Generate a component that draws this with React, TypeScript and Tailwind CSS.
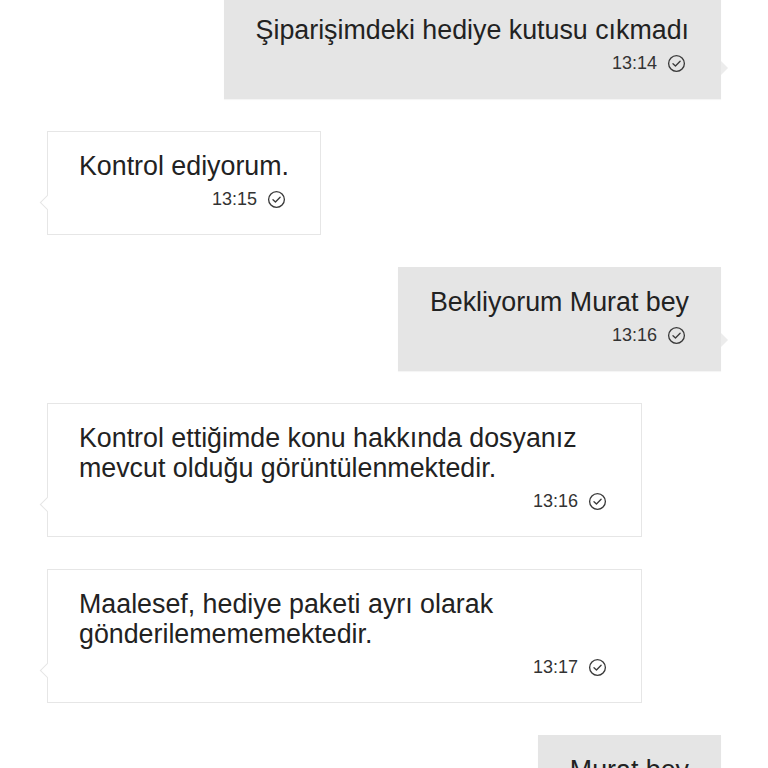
import React from "react";

type Msg = { side: "in" | "out"; lines: string[]; time: string };

const msgs: Msg[] = [
  { side: "out", lines: ["Şiparişimdeki hediye kutusu cıkmadı"], time: "13:14" },
  { side: "in", lines: ["Kontrol ediyorum."], time: "13:15" },
  { side: "out", lines: ["Bekliyorum Murat bey"], time: "13:16" },
  {
    side: "in",
    lines: ["Kontrol ettiğimde konu hakkında dosyanız", "mevcut olduğu görüntülenmektedir."],
    time: "13:16",
  },
  {
    side: "in",
    lines: ["Maalesef, hediye paketi ayrı olarak", "gönderilemememektedir."],
    time: "13:17",
  },
  { side: "out", lines: ["Murat bey"], time: "13:18" },
];

function Check() {
  return (
    <svg width="19" height="19" viewBox="0 0 20 20" fill="none" className="shrink-0">
      <circle cx="10" cy="10" r="8.3" stroke="#3a3a3a" strokeWidth="1.4" />
      <path d="M6.3 10.2 L8.9 12.7 L13.8 7.6" stroke="#3a3a3a" strokeWidth="1.4" strokeLinecap="round" strokeLinejoin="round" />
    </svg>
  );
}

function Bubble({ m }: { m: Msg }) {
  const out = m.side === "out";
  const wide = m.lines.length > 1;
  return (
    <div className={out ? "flex justify-end" : "flex justify-start"}>
      <div
        className={
          (out
            ? "relative bg-[#e5e5e5] shadow-[0_1px_1px_rgba(0,0,0,0.04)] px-[32px] pt-[20px] pb-[24px]"
            : "relative bg-white border border-[#e6e6e6] px-[31px] pt-[19px] pb-[23px]") +
          (wide ? " w-[595px]" : " w-fit")
        }
      >
        {out ? (
          <div className="absolute right-[-7px] bottom-[24px] w-0 h-0 border-y-[7px] border-y-transparent border-l-[7px] border-l-[#ececec]" />
        ) : (
          <div className="absolute left-[-6px] bottom-[26px] w-[11px] h-[11px] bg-white border-l border-b border-[#e6e6e6] rotate-45" />
        )}
        <div className="text-[26.8px] leading-[30px] text-[#222] whitespace-nowrap">
          {m.lines.map((l, i) => (
            <div key={i}>{l}</div>
          ))}
        </div>
        <div className="flex items-center justify-end gap-[10px] mt-[6px] pr-[3px] text-[18px] leading-[24px] text-[#333]">
          <span>{m.time}</span>
          <Check />
        </div>
      </div>
    </div>
  );
}

export default function App() {
  return (
    <div
      className="w-[768px] h-[768px] overflow-hidden bg-white px-[47px]"
      style={{ fontFamily: '"Liberation Sans", Arial, sans-serif' }}
    >
      <div className="flex flex-col gap-[32px] mt-[-5px]">
        {msgs.map((m, i) => (
          <Bubble key={i} m={m} />
        ))}
      </div>
    </div>
  );
}
